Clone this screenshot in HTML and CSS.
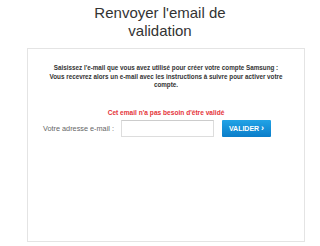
FILE: index.html
```html
<!DOCTYPE html>
<html>
<head>
<meta charset="utf-8">
<title>Renvoyer l'email de validation</title>
<link rel="stylesheet" href="styles.css">
</head>
<body>
	<div id="page">
		<h1>Renvoyer l'email de<br>validation</h1>
		<div id="box">
			<p class="intro">Saisissez l'e-mail que vous avez utilisé pour créer votre compte Samsung :<br>Vous recevrez alors un e-mail avec les instructions à suivre pour activer votre compte.</p>
			<p class="error">Cet email n'a pas besoin d'être validé</p>
			<div class="row">
				<label for="email">Votre adresse e-mail :</label>
				<input type="text" id="email">
				<button>VALIDER <span class="chev">&#x203A;</span></button>
			</div>
		</div>
	</div>
</body>
</html>
```

FILE: styles.css
```css
body {
	margin: 0;
	background-color: #fff;
	font-family: "Liberation Sans", Arial, sans-serif;
	color: #333;
}
#page h1 {
	font-size: 15px;
	font-weight: normal;
	line-height: 18px;
	text-align: center;
	color: #333;
	margin: 4px 0 8px 0;
}
#box {
	margin-left: 27px;
	width: 276px;
	height: 192px;
	border: 1px solid #e4e4e4;
	padding: 0;
}
#box .intro {
	font-size: 6.3px;
	font-weight: bold;
	line-height: 8.5px;
	text-align: center;
	color: #333;
	margin: 15px 18px 0 18px;
}
#box .error {
	font-size: 6.6px;
	font-weight: bold;
	text-align: center;
	color: #e5343a;
	margin: 19px 0 0 0;
}
#box .row {
	display: flex;
	align-items: center;
	margin: 4px 0 0 15px;
}
#box .row label {
	font-size: 7.3px;
	color: #666;
	width: 78px;
}
#box .row input {
	width: 91px;
	height: 15px;
	padding: 0;
	border: 1px solid #ddd;
	border-top-color: #ccc;
	margin: 0 8px 0 0;
	box-sizing: content-box;
}
#box .row button {
	width: 49px;
	height: 17px;
	border: 0;
	border-radius: 1px;
	background: linear-gradient(#22a3e6, #0a7dc9);
	color: #fff;
	font-family: "Liberation Sans", Arial, sans-serif;
	font-size: 7px;
	font-weight: bold;
	padding: 0;
}
#box .row button .chev {
	font-size: 9px;
}
```
